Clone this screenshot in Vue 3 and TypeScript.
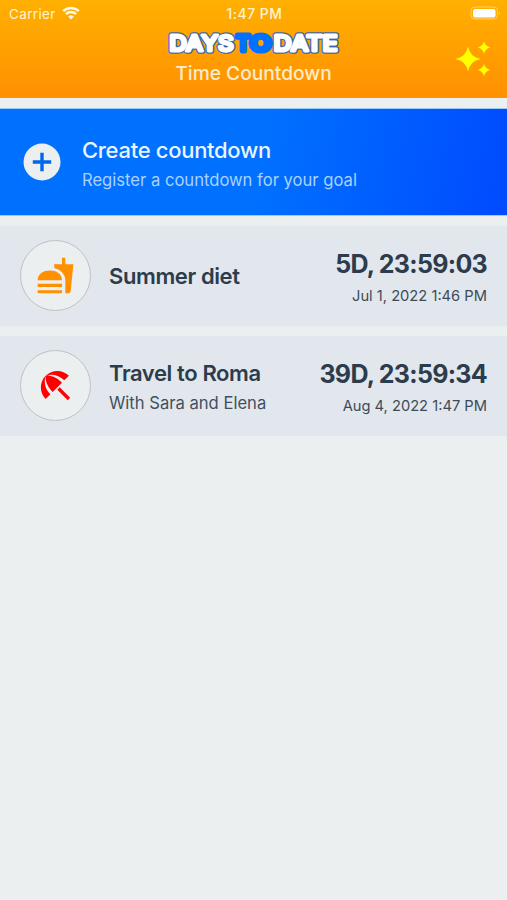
<script setup lang="ts">
interface Countdown {
  icon: 'food' | 'umbrella'
  title: string
  note?: string
  remaining: string
  date: string
}

const countdowns: Countdown[] = [
  { icon: 'food', title: 'Summer diet', remaining: '5D, 23:59:03', date: 'Jul 1, 2022 1:46 PM' },
  {
    icon: 'umbrella',
    title: 'Travel to Roma',
    note: 'With Sara and Elena',
    remaining: '39D, 23:59:34',
    date: 'Aug 4, 2022 1:47 PM',
  },
]
</script>

<template>
  <main class="screen">
    <header class="header">
      <div class="status">
        <div class="carrier">
          <span>Carrier</span>
          <svg class="wifi" viewBox="0 0 18 14">
            <path d="M1.2 5.1a11.2 11.2 0 0 1 15.6 0M4 8.1a7.2 7.2 0 0 1 10 0" />
            <path class="wifi-dot" d="M9 13.6l-2.8-2.9a4 4 0 0 1 5.6 0z" />
          </svg>
        </div>
        <span class="clock">1:47 PM</span>
        <svg class="battery" viewBox="0 0 32 14">
          <rect class="battery-shell" x="1" y="1" width="26.5" height="12" rx="3.6" />
          <rect class="battery-level" x="3" y="3" width="22.5" height="8.5" rx="2" />
          <path class="battery-cap" d="M29 5.2q2 1.8 0 3.6z" />
        </svg>
      </div>
      <div class="brand">
        <svg class="logo" viewBox="0 0 176 28" role="img" aria-label="DAYSTODATE">
          <g class="logo-edge">
            <text x="3.2" y="21" textLength="64.5" lengthAdjust="spacingAndGlyphs">DAYS</text>
            <text x="107.6" y="21" textLength="64" lengthAdjust="spacingAndGlyphs">DATE</text>
          </g>
          <g class="logo-face">
            <text x="3.2" y="21" textLength="64.5" lengthAdjust="spacingAndGlyphs">DAYS</text>
            <text x="107.6" y="21" textLength="64" lengthAdjust="spacingAndGlyphs">DATE</text>
          </g>
          <g class="logo-mid">
            <text x="70" y="21" textLength="14" lengthAdjust="spacingAndGlyphs">T</text>
            <text x="84" y="21" textLength="21" lengthAdjust="spacingAndGlyphs">O</text>
          </g>
        </svg>
        <h1 class="subtitle">Time Countdown</h1>
      </div>
      <svg class="sparkles" viewBox="0 0 36 36">
        <path d="M13 5.5Q15 16 25.5 18Q15 20 13 30.5Q11 20 .5 18Q11 16 13 5.5z" />
        <path d="M29 .3Q30.2 5.3 35.2 6.5Q30.2 7.7 29 12.7Q27.8 7.7 22.8 6.5Q27.8 5.3 29 .3z" />
        <path d="M29 22.8Q30.2 27.8 35.2 29Q30.2 30.2 29 35.2Q27.8 30.2 22.8 29Q27.8 27.8 29 22.8z" />
      </svg>
    </header>

    <section class="create">
      <svg class="plus" viewBox="0 0 38 38">
        <circle cx="19" cy="19" r="18.5" />
        <path d="M19 9.8v18.4M9.8 19h18.4" />
      </svg>
      <div class="create-text">
        <h2 class="create-title">Create countdown</h2>
        <p class="create-note">Register a countdown for your goal</p>
      </div>
    </section>

    <ul class="list">
      <li v-for="item in countdowns" :key="item.title" class="row">
        <div class="badge" :class="item.icon">
          <svg v-if="item.icon === 'food'" viewBox="0 0 24 24">
            <path
              d="M18.06 22.99h1.66c.84 0 1.53-.64 1.63-1.46L23 5.05h-5V1h-1.97v4.05h-4.97l.3 2.34c1.71.47 3.31 1.32 4.27 2.26 1.44 1.42 2.43 2.89 2.43 5.29v8.05zM1 21.99V21h15.03v.99c0 .55-.45 1-1.01 1H2.01c-.56 0-1.01-.45-1.01-1zm15.03-7c0-8-15.03-8-15.03 0h15.03zM1.02 17h15v2h-15z"
            />
          </svg>
          <svg v-else viewBox="0 0 24 24">
            <path
              d="M13.127 14.56l1.43-1.43 6.44 6.443L19.57 21zm4.293-5.73l2.86-2.86c-3.95-3.95-10.35-3.96-14.3-.02 3.93-1.3 8.31-.25 11.44 2.88zM5.95 5.98c-3.94 3.95-3.93 10.35.02 14.3l2.86-2.86C5.7 14.29 4.65 9.91 5.95 5.98zm.02-.02l-.01.01c-.38 3.01 1.17 6.88 4.3 10.02l5.73-5.73c-3.13-3.13-7.01-4.68-10.02-4.3z"
            />
          </svg>
        </div>
        <div class="label">
          <h3 class="title">{{ item.title }}</h3>
          <p v-if="item.note" class="note">{{ item.note }}</p>
        </div>
        <div class="time">
          <strong class="remaining">{{ item.remaining }}</strong>
          <span class="date">{{ item.date }}</span>
        </div>
      </li>
    </ul>
  </main>
</template>

<style>
body {
  background: #ebeff0;
}
</style>

<style scoped>
.screen {
  box-sizing: border-box;
  min-height: 900px;
  background: #ebeff0;
  font-family: Inter, 'Liberation Sans', sans-serif;
  color: #2c3c4c;
}
h1,
h2,
h3,
p,
ul {
  margin: 0;
  padding: 0;
}
svg {
  display: block;
  flex: none;
}
.header {
  position: relative;
  height: 98px;
  background: linear-gradient(#ffb000, #ff9000);
}
.status {
  display: grid;
  grid-template-columns: 1fr auto 1fr;
  align-items: center;
  height: 27px;
  padding: 0 5px 0 9px;
  font-size: 13.5px;
  color: #fff3d6;
}
.carrier {
  display: flex;
  align-items: center;
  gap: 6px;
  letter-spacing: 0.35px;
}
.wifi {
  width: 18px;
  height: 14px;
  margin-top: -2px;
  fill: none;
  stroke: #fff8e6;
  stroke-width: 2.5;
}
.wifi-dot {
  fill: #fff8e6;
  stroke: none;
}
.clock {
  font-weight: 500;
  font-size: 13.8px;
  letter-spacing: 0.55px;
  transform: translateX(-1px);
}
.battery {
  width: 32px;
  height: 14px;
  margin-top: -1px;
  justify-self: end;
}
.battery-shell {
  fill: none;
  stroke: #ffcf70;
  stroke-width: 1;
}
.battery-level {
  fill: #fff;
}
.battery-cap {
  fill: #ffcf70;
}
.brand {
  display: flex;
  flex-direction: column;
  align-items: center;
  padding-top: 3px;
}
.logo {
  width: 176px;
  height: 28px;
  font-family: Inter, sans-serif;
  font-size: 22px;
  font-weight: 500;
  stroke-linejoin: round;
  stroke-linecap: round;
}
.logo-edge {
  fill: #3c64ac;
  stroke: #3c64ac;
  stroke-width: 5.4;
}
.logo-face {
  fill: #fff;
  stroke: #fff;
  stroke-width: 3;
}
.logo-mid {
  fill: #0070ff;
  stroke: #0070ff;
  stroke-width: 5.2;
}
.subtitle {
  margin-top: 2px;
  font-size: 19.2px;
  line-height: 26px;
  font-weight: 500;
  color: #ffeccb;
}
.sparkles {
  position: absolute;
  top: 41px;
  right: 16px;
  width: 36px;
  height: 36px;
  fill: #ff0;
}
.create {
  display: flex;
  align-items: center;
  gap: 21px;
  box-sizing: border-box;
  height: 108px;
  margin: 10px 0;
  padding: 0 23px;
  border: solid #9cc8fb;
  border-width: 1px 0;
  background: linear-gradient(100deg, #0070ff 52%, #004cff 98%);
}
.plus {
  width: 38px;
  height: 38px;
  fill: #ebeff0;
  stroke: #0068e8;
  stroke-width: 3.4;
}
.plus circle {
  stroke: none;
}
.create-text {
  padding-top: 4px;
}
.create-title {
  font-size: 22px;
  line-height: 28px;
  font-weight: 500;
  letter-spacing: -0.3px;
  color: #eaf5ff;
}
.create-note {
  margin-top: 3px;
  font-size: 16.6px;
  line-height: 26px;
  color: #a9d2ff;
}
.list {
  display: flex;
  flex-direction: column;
  gap: 10px;
  list-style: none;
}
.row {
  display: flex;
  align-items: center;
  box-sizing: border-box;
  height: 100px;
  padding: 0 20px;
  background: #e2e7ed;
}
.badge {
  display: grid;
  place-items: center;
  box-sizing: border-box;
  width: 71px;
  height: 71px;
  margin-bottom: 1px;
  border: 1px solid #bec2c5;
  border-radius: 50%;
  background: #ebeff0;
}
.badge svg {
  width: 39px;
  height: 39px;
  fill: currentColor;
}
.food {
  color: #ff9000;
}
.umbrella {
  color: #f00;
}
.label {
  flex: 1;
  margin-left: 18px;
}
.title {
  font-size: 22px;
  line-height: 30px;
  font-weight: 600;
  letter-spacing: -0.4px;
  white-space: nowrap;
}
.note {
  margin: 2px 0 -2px;
  font-size: 16.6px;
  line-height: 26px;
  color: #425060;
}
.time {
  display: flex;
  flex-direction: column;
  align-items: flex-end;
  padding-top: 2px;
  white-space: nowrap;
}
.remaining {
  font-size: 25px;
  line-height: 34px;
  font-weight: 700;
  letter-spacing: -0.7px;
}
.date {
  margin-top: 4px;
  font-size: 14.7px;
  line-height: 22px;
  color: #3e4b59;
}
</style>
